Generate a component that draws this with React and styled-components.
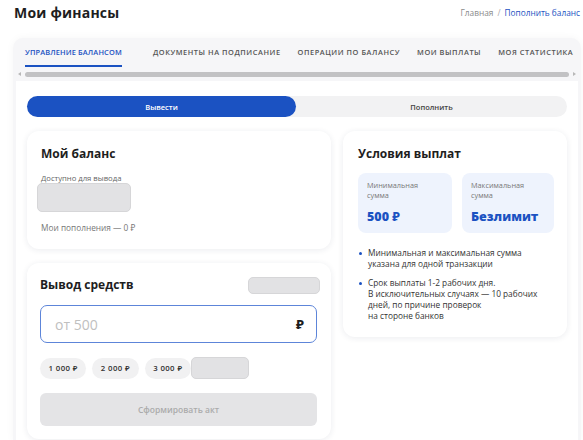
import React from 'react'
import styled, { createGlobalStyle } from 'styled-components'

const Global = createGlobalStyle`
  html, body {
    margin: 0;
    padding: 0;
    background: #fff;
    font-family: 'Open Sans', 'Noto Sans', sans-serif;
    color: #222;
    overflow: hidden;
  }
`

const BLUE = '#1b52c2'

const Page = styled.div`
  width: 583px;
  height: 440px;
  padding: 0 0 0 13px;
  box-sizing: border-box;
`

const Header = styled.div`
  display: flex;
  align-items: center;
  justify-content: space-between;
  height: 24px;
  padding: 0 3px 0 1px;
  h1 {
    margin: 0;
    font-size: 14px;
    font-weight: 700;
    letter-spacing: 0.2px;
    color: #1e1e1e;
  }
`

const Crumbs = styled.div`
  font-size: 8.3px;
  color: #8a8a8a;
  span {
    margin: 0 4px;
    color: #aaa;
  }
  a {
    color: ${BLUE};
    text-decoration: none;
  }
`

const Panel = styled.div`
  margin-top: 14px;
  background: #f6f6f8;
  border-radius: 10px 10px 0 0;
  padding: 0 3px;
  box-shadow: 0 0 8px rgba(0, 0, 0, 0.04);
  width: 568px;
  box-sizing: border-box;
`

const Tabs = styled.div`
  display: flex;
  gap: 17px;
  padding: 9px 0 0 9px;
  white-space: nowrap;
  overflow: hidden;
`

const Tab = styled.div`
  font-size: 7.4px;
  font-weight: 600;
  letter-spacing: ${p => (p.$active ? '0.15px' : '0.55px')};
  margin-right: ${p => (p.$active ? '14px' : '0')};
  color: ${p => (p.$active ? BLUE : '#555')};
  padding-bottom: 8px;
  border-bottom: 2.5px solid ${p => (p.$active ? BLUE : 'transparent')};
`

const Scroll = styled.div`
  display: flex;
  align-items: center;
  gap: 4px;
  height: 14px;
  padding: 0 2px;
  .thumb {
    flex: 1;
    height: 5px;
    border-radius: 3px;
    background: #c2c2c4;
  }
  .arr {
    width: 0;
    height: 0;
    border-top: 2.5px solid transparent;
    border-bottom: 2.5px solid transparent;
  }
  .l { border-right: 3px solid #b8b8b8; }
  .r { border-left: 3px solid #b8b8b8; }
`

const Content = styled.div`
  background: #fff;
  padding: 15px 11px 0 11px;
  height: 360px;
  box-sizing: border-box;
`

const Toggle = styled.div`
  display: flex;
  height: 21px;
  border-radius: 11px;
  background: #f2f2f3;
`

const ToggleBtn = styled.div`
  flex: ${p => (p.$active ? '0 0 269px' : '1')};
  display: flex;
  align-items: center;
  justify-content: center;
  border-radius: 11px;
  font-size: 7.5px;
  font-weight: 600;
  color: ${p => (p.$active ? '#fff' : '#444')};
  background: ${p => (p.$active ? BLUE : 'transparent')};
`

const Grid = styled.div`
  display: grid;
  grid-template-columns: 304px 224px;
  gap: 12px;
  margin-top: 14px;
  align-items: start;
`

const Col = styled.div`
  display: flex;
  flex-direction: column;
  gap: 14px;
`

const Card = styled.div`
  background: #fff;
  border-radius: 12px;
  box-shadow: 0 1px 6px rgba(30, 40, 80, 0.09);
  padding: ${p => p.$pad || '14px 14px 14px'};
  box-sizing: border-box;
  height: ${p => p.$h || 'auto'};
`

const CardTitle = styled.div`
  font-size: 12px;
  font-weight: 700;
  color: #1e1e1e;
  height: 18px;
  line-height: 18px;
`

const Small = styled.div`
  font-size: 7.7px;
  color: #666;
  margin-top: ${p => p.$mt || 0}px;
`

const Skeleton = styled.div`
  width: ${p => p.$w}px;
  height: ${p => p.$h}px;
  border-radius: 5px;
  background: #e2e2e4;
  border: 1px solid #d6d6d8;
  box-sizing: border-box;
  margin-left: ${p => p.$ml || 0}px;
`

const Note = styled.div`
  font-size: 8.3px;
  color: #777;
  margin-top: 10px;
`

const TitleRow = styled.div`
  display: flex;
  align-items: center;
  justify-content: space-between;
`

const Input = styled.div`
  margin: 11px 3px 0 0;
  height: 38px;
  border: 1px solid #5d85d9;
  border-radius: 7px;
  display: flex;
  align-items: center;
  justify-content: space-between;
  padding: 0 12px 0 14px;
  box-sizing: border-box;
  font-size: 14px;
  span { color: #c0c0c0; }
  b { color: #1e1e1e; font-weight: 800; font-size: 13px; }
`

const Chips = styled.div`
  display: flex;
  align-items: center;
  gap: 6px;
  margin-top: 14px;
`

const Chip = styled.div`
  height: 21px;
  padding: 0 8.5px;
  border-radius: 11px;
  background: #f1f1f2;
  font-size: 7.8px;
  font-weight: 600;
  letter-spacing: 0.4px;
  color: #333;
  display: flex;
  align-items: center;
`

const Submit = styled.div`
  margin: 14px 3px 0 0;
  height: 33px;
  border-radius: 6px;
  background: #e4e4e6;
  display: flex;
  align-items: center;
  justify-content: center;
  font-size: 8.5px;
  font-weight: 600;
  color: #ababab;
`

const Limits = styled.div`
  display: grid;
  grid-template-columns: 94px 92px;
  gap: 10px;
  margin-top: 10px;
`

const Limit = styled.div`
  background: #eef3fd;
  border-radius: 8px;
  height: 60px;
  padding: 8px 8px 0 9px;
  box-sizing: border-box;
  .lbl {
    font-size: 7.3px;
    line-height: 9.5px;
    color: #777;
  }
  .val {
    margin-top: 8px;
    font-size: 12.5px;
    font-weight: 800;
    color: ${BLUE};
  }
`

const List = styled.ul`
  margin: 14px 0 0;
  padding: 0;
  list-style: none;
  li {
    position: relative;
    padding-left: 10px;
    font-size: 8.3px;
    line-height: 11px;
    color: #333;
    margin-bottom: 8px;
  }
  li::before {
    content: '';
    position: absolute;
    left: 1px;
    top: 4.5px;
    width: 3px;
    height: 3px;
    border-radius: 50%;
    background: ${BLUE};
  }
`

const tabs = [
  'Управление балансом',
  'Документы на подписание',
  'Операции по балансу',
  'Мои выплаты',
  'Моя статистика'
]

export default function App () {
  return (
    <>
      <Global />
      <Page>
        <Header>
          <h1>Мои финансы</h1>
          <Crumbs>
            Главная<span>/</span><a href="#">Пополнить баланс</a>
          </Crumbs>
        </Header>
        <Panel>
          <Tabs>
            {tabs.map((t, i) => (
              <Tab key={t} $active={i === 0}>{t.toUpperCase()}</Tab>
            ))}
          </Tabs>
          <Scroll>
            <div className="arr l" />
            <div className="thumb" />
            <div className="arr r" />
          </Scroll>
          <Content>
            <Toggle>
              <ToggleBtn $active>Вывести</ToggleBtn>
              <ToggleBtn>Пополнить</ToggleBtn>
            </Toggle>
            <Grid>
              <Col>
                <Card $h="118px">
                  <CardTitle>Мой баланс</CardTitle>
                  <Small $mt={10}>Доступно для вывода</Small>
                  <Skeleton $w={94} $h={29} $ml={-4} />
                  <Note>Мои пополнения — 0 ₽</Note>
                </Card>
                <Card $h="176px" $pad="13px 11px 14px 13px">
                  <TitleRow>
                    <CardTitle>Вывод средств</CardTitle>
                    <Skeleton $w={72} $h={17} />
                  </TitleRow>
                  <Input>
                    <span>от 500</span>
                    <b>₽</b>
                  </Input>
                  <Chips>
                    <Chip>1 000 ₽</Chip>
                    <Chip>2 000 ₽</Chip>
                    <Chip>3 000 ₽</Chip>
                    <Skeleton $w={58} $h={22} $ml={-6} />
                  </Chips>
                  <Submit>Сформировать акт</Submit>
                </Card>
              </Col>
              <Card $h="206px" $pad="14px 14px 14px 15px">
                <CardTitle>Условия выплат</CardTitle>
                <Limits>
                  <Limit>
                    <div className="lbl">Минимальная<br />сумма</div>
                    <div className="val">500 ₽</div>
                  </Limit>
                  <Limit>
                    <div className="lbl">Максимальная<br />сумма</div>
                    <div className="val">Безлимит</div>
                  </Limit>
                </Limits>
                <List>
                  <li>Минимальная и максимальная сумма<br />указана для одной транзакции</li>
                  <li>Срок выплаты 1-2 рабочих дня.<br />В исключительных случаях — 10 рабочих<br />дней, по причине проверок<br />на стороне банков</li>
                </List>
              </Card>
            </Grid>
          </Content>
        </Panel>
      </Page>
    </>
  )
}
